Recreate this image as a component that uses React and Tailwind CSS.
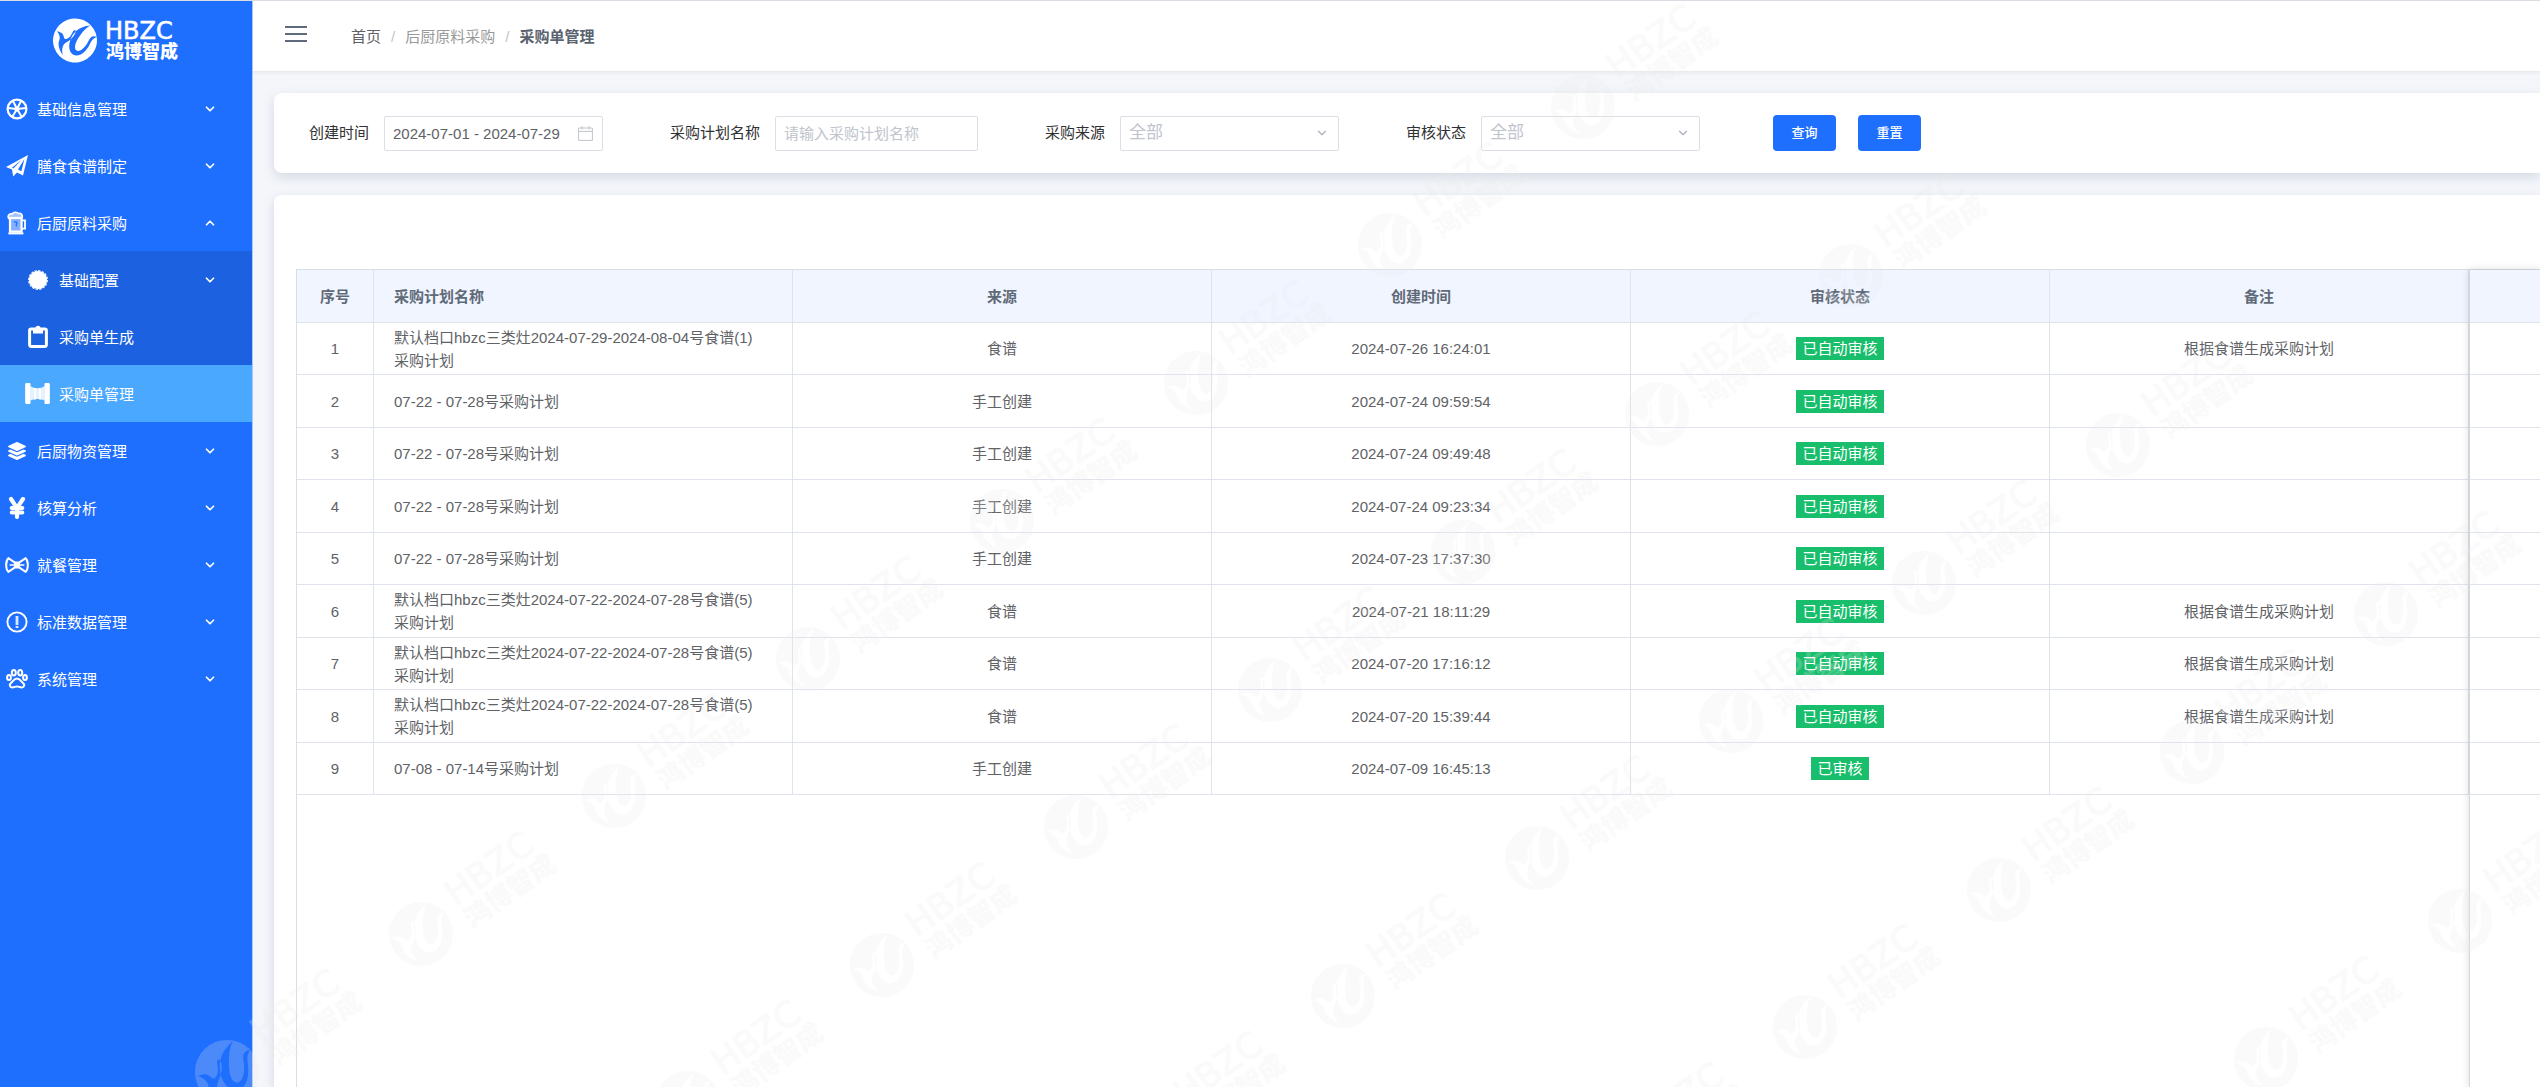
import { useState } from "react";
import clsx from "clsx";
import { FaLayerGroup, FaYenSign } from "react-icons/fa6";
import { ChevronDown, ChevronUp } from "lucide-react";

const MARK_PATH =
  "M0-66A66 66 0 1 0 0 66A66 66 0 1 0 0-66Z" +
  "M-60 8C-50 4-42 2-34 10C-28 16-24 14-20 4C-16-8-24-20-18-26C-10-24-10-8-12 2C-14 16-22 20-20 34C-18 44-12 50-6 56C-20 52-34 42-38 30C-40 18-48 12-60 8Z" +
  "M12-63C-16-40-18-14-12 8C-6 28 8 40 20 38C40 34 46 10 43-14C42-28 40-36 48-46C34-44 32-36 34-22C38 0 32 22 20 22C8 20 3 0 4-22C4-38 6-52 12-63Z";

const LogoShape = () => (
  <>
    <path d={MARK_PATH} fillRule="evenodd" transform="rotate(35) scale(0.333)" />
    <text
      x="30"
      y="-2"
      className="text-[24px] font-normal"
      fontFamily="DejaVu Sans, sans-serif"
      stroke="currentColor"
      strokeWidth="0.6"
    >
      HBZC
    </text>
    <text
      x="31"
      y="17"
      className="text-[18px] font-black"
      fontFamily="Noto Sans CJK SC, sans-serif"
    >
      鸿博智成
    </text>
  </>
);

// [x, y] of every stamp on the page overlay
const WATERMARKS = [
  [227, 1071], [421, 933], [614, 795], [808, 658], [1002, 520], [1196, 382], [1390, 244], [1583, 106],
  [688, 1102], [882, 964], [1076, 826], [1270, 689], [1463, 551], [1657, 413], [1851, 275],
  [1150, 1133], [1343, 995], [1537, 857], [1731, 720], [1924, 582], [2118, 444],
  [1611, 1164], [1805, 1026], [1999, 889], [2192, 751], [2386, 613],
  [2266, 1058], [2460, 920],
];

const Watermark = () => (
  <svg
    className="absolute inset-0 w-full h-full pointer-events-none text-[#ebebeb] opacity-[0.22] z-20"
    fill="currentColor"
    aria-hidden="true"
  >
    {WATERMARKS.map(([x, y]) => (
      <g key={`${x}-${y}`} transform={`translate(${x} ${y}) rotate(-35) scale(1.46)`}>
        <LogoShape />
      </g>
    ))}
  </svg>
);

const WheelIcon = () => (
  <svg viewBox="0 0 22 22" className="w-[22px] h-[22px]" fill="none" stroke="currentColor">
    <circle cx="11" cy="11" r="9.4" strokeWidth="2.2" />
    <path
      d="M11 11L7 3M11 11L15 3M11 11L2 10M11 11L20 10M11 11L6.5 18.5M11 11L15.5 18.5"
      strokeWidth="2"
    />
    <circle cx="11" cy="11" r="2.6" fill="currentColor" stroke="none" />
  </svg>
);

const PlaneIcon = () => (
  <svg viewBox="0 0 22 22" className="w-[22px] h-[22px]" fill="currentColor">
    <path
      fillRule="evenodd"
      d="M22 0L0 12L6 14.6L7.2 21.6L11 17.4L17 20.6ZM18.4 4L15.4 16.2L12 14.4ZM16 4.6L7.4 13.4L6 12.8Z"
    />
  </svg>
);

const BeerIcon = () => (
  <svg viewBox="0 0 20 24" className="w-5 h-6" fill="none" stroke="currentColor">
    <path
      d="M2 8C0 5 2 2.4 5 3C6 .8 10 .6 11.4 2.4C14 1.6 16 4 15 7"
      strokeWidth="1.6"
      fill="currentColor"
      fillOpacity="0.6"
    />
    <rect x="3" y="7" width="11.6" height="13.6" strokeWidth="2.2" fill="currentColor" fillOpacity="0.45" />
    <path d="M14.6 9.4H18V17.6H14.6" strokeWidth="1.8" />
    <path d="M1.4 22.4H16.4" strokeWidth="2" />
    <path d="M7 11.4C9 10 11 11.4 9.4 13.4V15.4" stroke="#1f6fff" strokeWidth="1.3" />
  </svg>
);

const BadgeIcon = () => (
  <svg viewBox="0 0 20 20" className="w-5 h-5" fill="currentColor">
    <circle cx="10" cy="10" r="9" />
    <circle cx="10" cy="10" r="9.2" fill="none" stroke="currentColor" strokeWidth="1.4" strokeDasharray="2.4 1.2" />
  </svg>
);

const ClipboardIcon = () => (
  <svg viewBox="0 0 20 23" className="w-5 h-[23px]" fill="none" stroke="currentColor">
    <rect x="1.6" y="4" width="16.8" height="17.4" rx="1.6" strokeWidth="3" />
    <path d="M5 8.4V3.4H7.4A2.6 2.6 0 0 1 12.6 3.4H15V8.4Z" fill="currentColor" stroke="none" />
  </svg>
);

const PillarIcon = () => (
  <svg viewBox="0 0 25 21" className="w-[25px] h-[21px]" fill="currentColor">
    <path d="M0 .4H5.6V3C9 6 16 6 19.4 3V.4H25V20.6H19.4V17.6C16 15.6 9 15.6 5.6 17.6V20.6H0Z" fillOpacity="0.85" />
    <path d="M1 0H5V21H1ZM20 0H24V21H20ZM9 5H11V16.6H9ZM14 5H16V16.6H14Z" />
  </svg>
);

const BowIcon = () => (
  <svg viewBox="0 0 24 16" className="w-6 h-4" fill="none" stroke="currentColor" strokeWidth="2">
    <path d="M9.6 5.4L3.4 1.2C.4 4 .4 12 3.4 14.8L9.6 10.6" />
    <path d="M14.4 5.4L20.6 1.2C23.6 4 23.6 12 20.6 14.8L14.4 10.6" />
    <rect x="9.4" y="5" width="5.2" height="6" fill="currentColor" strokeWidth="1" />
    <path d="M4.6 8H9.4M14.6 8H19.4" strokeWidth="1.4" />
  </svg>
);

const AlertIcon = () => (
  <svg viewBox="0 0 22 22" className="w-[22px] h-[22px]" fill="none" stroke="currentColor">
    <circle cx="11" cy="11" r="9.6" strokeWidth="1.9" />
    <path d="M11 5V14M11 15V17" strokeWidth="2.8" strokeOpacity="0.85" />
  </svg>
);

const PawIcon = () => (
  <svg viewBox="0 0 22 20" className="w-[22px] h-5" fill="none" stroke="currentColor" strokeWidth="2">
    <ellipse cx="7.8" cy="3.8" rx="2" ry="2.8" />
    <ellipse cx="14.2" cy="3.8" rx="2" ry="2.8" />
    <ellipse cx="3" cy="8.6" rx="1.9" ry="2.5" />
    <ellipse cx="19" cy="8.6" rx="1.9" ry="2.5" />
    <path d="M11 9.4C8 9.4 7.6 12 5.4 13.6C2.6 15.6 3.8 18.6 6.6 18.4C8.4 18.2 9.4 17.4 11 17.4C12.6 17.4 13.6 18.2 15.4 18.4C18.2 18.6 19.4 15.6 16.6 13.6C14.4 12 14 9.4 11 9.4Z" />
  </svg>
);

const CalendarIcon = () => (
  <svg viewBox="0 0 15 15" className="w-[15px] h-[15px]" fill="none" stroke="currentColor">
    <path d="M.6 2H14.4V14.4H.6ZM.6 5.4H14.4M4 0V3.6M11 0V3.6" />
  </svg>
);

const MENU = [
  { label: "基础信息管理", icon: <WheelIcon /> },
  { label: "膳食食谱制定", icon: <PlaneIcon /> },
  {
    label: "后厨原料采购",
    icon: <BeerIcon />,
    children: [
      { label: "基础配置", icon: <BadgeIcon />, expandable: true },
      { label: "采购单生成", icon: <ClipboardIcon /> },
      { label: "采购单管理", icon: <PillarIcon />, active: true },
    ],
  },
  { label: "后厨物资管理", icon: <FaLayerGroup size={20} /> },
  { label: "核算分析", icon: <FaYenSign size={24} stroke="currentColor" strokeWidth={24} /> },
  { label: "就餐管理", icon: <BowIcon /> },
  { label: "标准数据管理", icon: <AlertIcon /> },
  { label: "系统管理", icon: <PawIcon /> },
];

const AUTO = "已自动审核";
const NOTE = "根据食谱生成采购计划";

const ROWS = [
  { name: "默认档口hbzc三类灶2024-07-29-2024-08-04号食谱(1)采购计划", source: "食谱", time: "2024-07-26 16:24:01", status: AUTO, note: NOTE },
  { name: "07-22 - 07-28号采购计划", source: "手工创建", time: "2024-07-24 09:59:54", status: AUTO, note: "" },
  { name: "07-22 - 07-28号采购计划", source: "手工创建", time: "2024-07-24 09:49:48", status: AUTO, note: "" },
  { name: "07-22 - 07-28号采购计划", source: "手工创建", time: "2024-07-24 09:23:34", status: AUTO, note: "" },
  { name: "07-22 - 07-28号采购计划", source: "手工创建", time: "2024-07-23 17:37:30", status: AUTO, note: "" },
  { name: "默认档口hbzc三类灶2024-07-22-2024-07-28号食谱(5)采购计划", source: "食谱", time: "2024-07-21 18:11:29", status: AUTO, note: NOTE },
  { name: "默认档口hbzc三类灶2024-07-22-2024-07-28号食谱(5)采购计划", source: "食谱", time: "2024-07-20 17:16:12", status: AUTO, note: NOTE },
  { name: "默认档口hbzc三类灶2024-07-22-2024-07-28号食谱(5)采购计划", source: "食谱", time: "2024-07-20 15:39:44", status: AUTO, note: NOTE },
  { name: "07-08 - 07-14号采购计划", source: "手工创建", time: "2024-07-09 16:45:13", status: "已审核", note: "" },
];

const MenuItem = ({ item, nested, open, onToggle }) => {
  const Chevron = open ? ChevronUp : ChevronDown;
  const inner = (
    <>
      <span className={clsx("flex justify-center shrink-0", nested ? "w-[27px]" : "w-6")}>
        {item.icon}
      </span>
      <span className="flex-1 ml-2 pt-1 text-left">{item.label}</span>
    </>
  );

  if (nested && !item.expandable) {
    return (
      <a
        href="#"
        className={clsx(
          "flex items-center h-[57px] pl-6 pr-9",
          item.active ? "bg-[#4ba8ff]" : "bg-[#1c62e0]"
        )}
      >
        {inner}
      </a>
    );
  }

  return (
    <button
      type="button"
      onClick={onToggle}
      className={clsx(
        "flex items-center w-full h-[57px] pr-[35px]",
        nested ? "pl-6 bg-[#1c62e0]" : "pl-[5px]"
      )}
    >
      {inner}
      <Chevron size={14} strokeWidth={3} />
    </button>
  );
};

const Sidebar = () => {
  const [openMenu, setOpenMenu] = useState("后厨原料采购");

  return (
    <aside className="w-[253px] shrink-0 bg-[#1f6fff] border-r border-[#a9c6fb] text-white text-[15px]">
      <div className="h-[79px]">
        <svg
          viewBox="0 0 140 46"
          className="w-[140px] h-[79px] ml-[52px] text-white"
          fill="currentColor"
          role="img"
          aria-label="HBZC 鸿博智成"
        >
          <g transform="translate(23 23)">
            <LogoShape />
          </g>
        </svg>
      </div>
      <nav>
        {MENU.map((item) => (
          <div key={item.label}>
            <MenuItem
              item={item}
              open={openMenu === item.label}
              onToggle={() => setOpenMenu(openMenu === item.label ? "" : item.label)}
            />
            {openMenu === item.label &&
              item.children?.map((child) => <MenuItem key={child.label} item={child} nested />)}
          </div>
        ))}
      </nav>
    </aside>
  );
};

const Header = () => (
  <header className="flex items-center h-[71px] shrink-0 bg-white pl-8 border-b border-[#e6ebf0] shadow-[0_1px_4px_rgba(0,21,41,0.06)]">
    <button type="button" aria-label="折叠菜单" className="flex flex-col gap-[5px] w-[22px] pb-1">
      <span className="h-[2px] bg-[#5f6b7a]" />
      <span className="h-[2px] bg-[#5f6b7a]" />
      <span className="h-[2px] bg-[#5f6b7a]" />
    </button>
    <nav className="flex items-center gap-[10px] ml-11 pt-[2px] text-[15px] text-[#606266]">
      <a href="#">首页</a>
      <span className="text-[#c0c4cc]">/</span>
      <a href="#" className="text-[#999999]">后厨原料采购</a>
      <span className="text-[#c0c4cc]">/</span>
      <span className="font-bold text-[#5a6370]">采购单管理</span>
    </nav>
  </header>
);

const SelectField = ({ id, label, options }) => (
  <div className="flex items-center">
    <label htmlFor={id} className="w-[75px] text-[#303133]">{label}</label>
    <div className="relative">
      <select
        id={id}
        className="appearance-none w-[219px] h-[35px] pl-2 pr-8 text-[17px] text-[#c0c4cc] bg-white border border-[#dcdfe6] rounded-xs"
      >
        {options.map((option) => (
          <option key={option}>{option}</option>
        ))}
      </select>
      <ChevronDown
        size={14}
        className="absolute right-[10px] top-[10px] text-[#a8afbb] pointer-events-none"
      />
    </div>
  </div>
);

const FilterBar = () => {
  const [name, setName] = useState("");

  return (
    <form
      onSubmit={(e) => e.preventDefault()}
      className="flex items-center gap-[67px] h-20 shrink-0 pl-[35px] bg-white rounded-l-lg text-[15px] shadow-[0_4px_12px_rgba(60,90,120,0.18)]"
    >
      <div className="flex items-center">
        <label htmlFor="created" className="w-[75px] text-[#303133]">创建时间</label>
        <div className="relative">
          <input
            id="created"
            type="text"
            readOnly
            value="2024-07-01 - 2024-07-29"
            className="w-[219px] h-[35px] px-2 text-[#606266] border border-[#dcdfe6] rounded-xs"
          />
          <span className="absolute right-[10px] top-[10px] text-[#c0c4cc]">
            <CalendarIcon />
          </span>
        </div>
      </div>
      <div className="flex items-center">
        <label htmlFor="plan" className="w-[105px] text-[#303133]">采购计划名称</label>
        <input
          id="plan"
          type="text"
          value={name}
          onChange={(e) => setName(e.target.value)}
          placeholder="请输入采购计划名称"
          className="w-[203px] h-[35px] px-2 border border-[#dcdfe6] rounded-xs placeholder:text-[#c0c4cc]"
        />
      </div>
      <SelectField id="source" label="采购来源" options={["全部", "食谱", "手工创建"]} />
      <SelectField id="status" label="审核状态" options={["全部", "已审核", "已自动审核"]} />
      <div className="flex gap-[22px] ml-[6px] text-[13px] font-medium text-white">
        <button type="submit" className="w-[63px] h-9 rounded bg-[#1f6fff]">查询</button>
        <button type="button" onClick={() => setName("")} className="w-[63px] h-9 rounded bg-[#1f6fff]">
          重置
        </button>
      </div>
    </form>
  );
};

const TH = "border-r border-b border-[#dfe4ec] font-bold text-[#606a78]";
const TD = "border-r border-b border-[#dfe4ec] text-center";

const PlanTable = () => (
  <section className="flex flex-col flex-1 pl-[22px] pt-[74px] bg-white rounded-tl-lg shadow-[0_4px_12px_rgba(60,90,120,0.18)]">
    <div className="relative flex-1 border-l border-t border-[#d8dee6]">
      <table className="w-full table-fixed border-separate border-spacing-0 text-[15px] leading-[23px] text-[#606266]">
        <thead>
          <tr className="h-[53px] bg-[#f0f5ff]">
            <th className={clsx(TH, "w-[77px]")}>序号</th>
            <th className={clsx(TH, "pl-5 text-left")}>采购计划名称</th>
            <th className={TH}>来源</th>
            <th className={TH}>创建时间</th>
            <th className={TH}>审核状态</th>
            <th className={TH}>备注</th>
            <th className="w-[71px] border-b border-[#dfe4ec]" />
          </tr>
        </thead>
        <tbody>
          {ROWS.map((row, i) => (
            <tr key={row.time} className="h-[52px] even:h-[53px]">
              <td className={TD}>{i + 1}</td>
              <td className={clsx(TD, "pl-5 pr-8 text-left")}>{row.name}</td>
              <td className={TD}>{row.source}</td>
              <td className={TD}>{row.time}</td>
              <td className={TD}>
                <span className="inline-block px-[6px] bg-[#18be6b] text-white">{row.status}</span>
              </td>
              <td className={TD}>{row.note}</td>
              <td className="border-b border-[#dfe4ec]" />
            </tr>
          ))}
        </tbody>
      </table>
      {/* edge of the pinned column */}
      <div className="absolute inset-y-0 right-0 w-[71px] border-l border-[#d3d7de] shadow-[0_0_8px_rgba(0,0,0,0.15)] pointer-events-none" />
    </div>
  </section>
);

const App = () => (
  <div className="relative flex h-screen overflow-hidden border-t border-[#d9dde3] bg-[#f4f6fa] font-['Liberation_Sans','Noto_Sans_CJK_SC',sans-serif]">
    <Sidebar />
    <div className="flex flex-col flex-1 min-w-0">
      <Header />
      <main className="flex flex-col flex-1 gap-[22px] pt-[21px] pl-[21px]">
        <FilterBar />
        <PlanTable />
      </main>
    </div>
    <Watermark />
  </div>
);

export default App;
